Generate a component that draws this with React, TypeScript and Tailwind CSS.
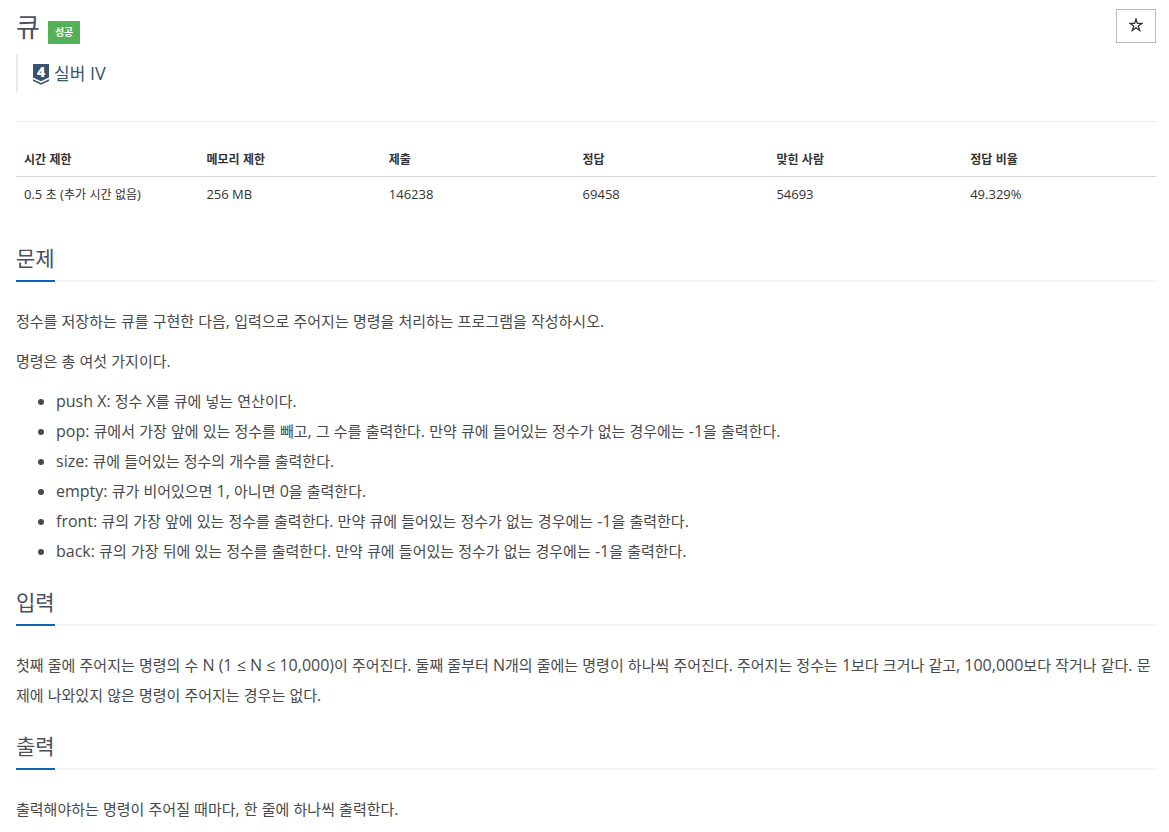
import type { ReactNode } from "react";

const HANGUL = /([가-힣]+)/;

const limits = [
  { label: "시간 제한", value: "0.5 초 (추가 시간 없음)", width: "w-[16%]" },
  { label: "메모리 제한", value: "256 MB", width: "w-[16%]" },
  { label: "제출", value: "146238", width: "w-[17%]" },
  { label: "정답", value: "69458", width: "w-[17%]" },
  { label: "맞힌 사람", value: "54693", width: "w-[17%]" },
  { label: "정답 비율", value: "49.329%", width: "w-[17%]" },
];

const commands = [
  "push X: 정수 X를 큐에 넣는 연산이다.",
  "pop: 큐에서 가장 앞에 있는 정수를 빼고, 그 수를 출력한다. 만약 큐에 들어있는 정수가 없는 경우에는 -1을 출력한다.",
  "size: 큐에 들어있는 정수의 개수를 출력한다.",
  "empty: 큐가 비어있으면 1, 아니면 0을 출력한다.",
  "front: 큐의 가장 앞에 있는 정수를 출력한다. 만약 큐에 들어있는 정수가 없는 경우에는 -1을 출력한다.",
  "back: 큐의 가장 뒤에 있는 정수를 출력한다. 만약 큐에 들어있는 정수가 없는 경우에는 -1을 출력한다.",
];

/* Sets Hangul one size below the Latin text around it. */
function Mixed({ text, hangul }: { text: string; hangul: string }) {
  return (
    <>
      {text.split(HANGUL).map((part, i) =>
        i % 2 === 1 ? (
          <span key={i} className={hangul}>
            {part}
          </span>
        ) : (
          part
        ),
      )}
    </>
  );
}

function Section({ title, children }: { title: string; children: ReactNode }) {
  return (
    <section className="mb-[18px]">
      <div className="mb-[25px] flex border-b border-dotted border-[#e4e4e7]">
        <h2 className="-mb-[2px] border-b-2 border-[#0b67b6] pb-1 text-[21px] leading-[36px] text-[#494f5b]">
          {title}
        </h2>
      </div>
      {children}
    </section>
  );
}

function Paragraph({ text }: { text: string }) {
  return (
    <p className="mb-[10px] text-base leading-[30px]">
      <Mixed text={text} hangul="text-[15px] leading-none" />
    </p>
  );
}

function TierIcon() {
  return (
    <svg viewBox="0 0 16 21" className="mt-0.5 h-[21px] w-4 overflow-visible" aria-hidden="true">
      <path d="M0 0H16V13.4L8 17.2L0 13.4Z" fill="#38546e" />
      <path d="M0 15.2L8 19L16 15.2V17L8 20.8L0 17Z" fill="#38546e" />
      <text
        x="8"
        y="13"
        textAnchor="middle"
        fontFamily="Open Sans, sans-serif"
        fontWeight="800"
        fontSize="14"
        fill="#fff"
      >
        4
      </text>
    </svg>
  );
}

export default function App() {
  return (
    <main
      lang="ko"
      className="bg-white pr-[13px] pl-4 font-['Open_Sans','Noto_Sans_CJK_KR',sans-serif] text-[#484848]"
    >
      <header className="border-b border-[#ebebeb] pt-[9px] pb-[29px]">
        <div className="flex items-start justify-between">
          <div className="flex items-end gap-2">
            <h1 className="text-[26px] leading-[36px] text-[#4b515d]">큐</h1>
            <span className="mb-px bg-[#53b257] px-[7px] text-[10px] leading-[23px] font-bold text-white">
              성공
            </span>
          </div>
          <button
            type="button"
            aria-label="즐겨찾기"
            className="flex h-[34px] w-10 items-center justify-center border border-[#bbbbbb] bg-white pr-px pb-0.5"
          >
            <svg viewBox="0 0 14 14" className="size-[14px]" aria-hidden="true">
              <path
                d="M7 1L8.4 5.4H12.9L9.3 8.1L10.7 12.5L7 9.8L3.3 12.5L4.7 8.1L1.1 5.4H5.6Z"
                fill="none"
                stroke="#333"
                strokeWidth="1.3"
              />
            </svg>
          </button>
        </div>
        <blockquote className="mt-[9px] flex h-[38px] items-center border-l-2 border-[#ebebeb] pl-[15px]">
          <a href="#silver" className="flex items-center gap-[5px] text-[#38546e]">
            <TierIcon />
            <span className="text-lg leading-[25px]">
              <Mixed text="실버 IV" hangul="text-[17px] leading-none" />
            </span>
          </a>
        </blockquote>
      </header>

      <table className="mt-5 mb-[29px] w-full table-fixed text-left text-[13px] leading-[18px] text-[#333333]">
        <thead>
          <tr className="border-b border-[#d6d6d6]">
            {limits.map((item) => (
              <th key={item.label} scope="col" className={`${item.width} p-2 font-bold`}>
                <Mixed text={item.label} hangul="text-xs leading-none" />
              </th>
            ))}
          </tr>
        </thead>
        <tbody>
          <tr>
            {limits.map((item) => (
              <td key={item.label} className="p-2">
                <Mixed text={item.value} hangul="text-xs leading-none" />
              </td>
            ))}
          </tr>
        </tbody>
      </table>

      <Section title="문제">
        <Paragraph text="정수를 저장하는 큐를 구현한 다음, 입력으로 주어지는 명령을 처리하는 프로그램을 작성하시오." />
        <Paragraph text="명령은 총 여섯 가지이다." />
        <ul className="list-disc pl-10 text-base leading-[30px]">
          {commands.map((command) => (
            <li key={command}>
              <Mixed text={command} hangul="text-[15px] leading-none" />
            </li>
          ))}
        </ul>
      </Section>

      <Section title="입력">
        <Paragraph text="첫째 줄에 주어지는 명령의 수 N (1 ≤ N ≤ 10,000)이 주어진다. 둘째 줄부터 N개의 줄에는 명령이 하나씩 주어진다. 주어지는 정수는 1보다 크거나 같고, 100,000보다 작거나 같다. 문제에 나와있지 않은 명령이 주어지는 경우는 없다." />
      </Section>

      <Section title="출력">
        <Paragraph text="출력해야하는 명령이 주어질 때마다, 한 줄에 하나씩 출력한다." />
      </Section>
    </main>
  );
}
